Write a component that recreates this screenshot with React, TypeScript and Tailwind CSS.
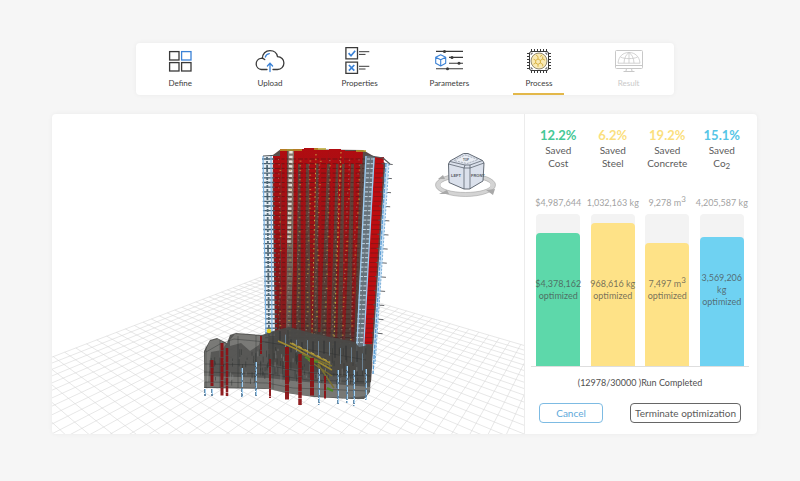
import type { ReactNode } from 'react';

interface Step {
  label: string;
  icon: ReactNode;
  state?: 'active' | 'disabled';
}

interface Metric {
  percent: string;
  name: ReactNode;
  original: ReactNode;
  optimized: ReactNode;
  fill: number;
  textClass: string;
  barClass: string;
}

const INK = '#3a3a3a';
const BLUE = '#3b82d6';

function DefineIcon() {
  return (
    <svg viewBox="0 0 30 30" className="h-[30px] w-[30px]" fill="none" stroke={INK} strokeWidth="1.3">
      <rect x="4.6" y="5.6" width="9.4" height="8.4" />
      <rect x="16.6" y="5.6" width="9.4" height="8.4" stroke={BLUE} />
      <rect x="4.6" y="16.6" width="9.4" height="8.4" />
      <rect x="16.6" y="16.6" width="9.4" height="8.4" />
    </svg>
  );
}

function UploadIcon() {
  return (
    <svg viewBox="0 0 30 30" className="h-[30px] w-[30px]" fill="none" strokeLinecap="round" strokeWidth="1.3">
      <path d="M12 23.5H6.4a5.6 5.6 0 0 1-.6-11.1 3.600 3.600 0 0 1 1.700-.1C7.400 7.800 10.600 4.600 15 4.600c3.800 0 6.800 2.400 7.500 6 3.700.2 6.400 2.900 6.400 6.300 0 3.700-2.700 6.600-6.400 6.600H18" stroke={INK} />
      <path d="M7.500 12.400c1 .2 1.700.6 2.300 1.200" stroke={INK} />
      <path d="M10.300 11c.5-1.900 1.900-3.100 4-3.400" stroke={BLUE} />
      <path d="M15 25.500v-8M12.400 20l2.600-2.700 2.600 2.700" stroke={BLUE} />
    </svg>
  );
}

function PropertiesIcon() {
  return (
    <svg viewBox="0 0 30 30" className="h-[30px] w-[30px]" fill="none" strokeWidth="1.3">
      <path d="M.9 1.600h11.600v11.200H.9zM.9 16.200h11.600v11.200H.9z" stroke={INK} />
      <path d="M3.600 7.200L6 9.800l4.200-5M3.900 19l5.400 5.600M9.300 19l-5.400 5.600" stroke={BLUE} strokeWidth="1.700" />
      <path d="M14 5.700h10.300M14 8.400h6.500M14 20.300h10.300M14 23h6.500" stroke={INK} strokeWidth="1" />
    </svg>
  );
}

function ParametersIcon() {
  return (
    <svg viewBox="0 0 30 30" className="h-[30px] w-[30px]" fill="none" stroke={INK} strokeWidth="1.100">
      <path d="M2 5.400h27M15 11.400h14M15 17.200h14M2 22.800h27" />
      <g fill={INK} stroke="none">
        <circle cx="10.500" cy="5.400" r="1.500" />
        <circle cx="18" cy="11.400" r="1.500" />
        <circle cx="25" cy="17.200" r="1.500" />
        <circle cx="13.500" cy="22.800" r="1.500" />
      </g>
      <path d="M6.700 8.800l5 2.500v6l-5 2.700-5-2.700v-6zM1.700 11.300l5 2.500 5-2.500M6.700 13.800V20" stroke={BLUE} strokeLinejoin="round" />
    </svg>
  );
}

function ProcessIcon() {
  const pins = [7.5, 10.5, 13.5, 16.5, 19.5, 22.5];
  return (
    <svg viewBox="0 0 30 30" className="h-[30px] w-[30px]" fill="none" stroke={INK} strokeWidth="1">
      {pins.map((p) => (
        <path key={p} d={`M${p} 3v3M${p} 24v3M3 ${p}h3M24 ${p}h3`} />
      ))}
      <rect x="5.500" y="5.500" width="19" height="19" rx="2" />
      <circle cx="15" cy="15" r="8" fill="#f9e9b4" stroke="#77705c" strokeWidth=".8" />
      <path
        d="M12 9l2 1.600v2.400l-2.300 1.300-2.200-1.200M18 9l-2 1.600M14 13l2.400 1.300 2.300-1.300v-2.400M16.400 14.300v2.700L14 18.400l-2.300-1.400v-2.700M16.400 17l2.300 1.300v2M14 18.400v2.400M11.700 17l-2.200 1.200M18.700 13l2.300 1.200"
        stroke="#cfa62c"
        strokeWidth=".8"
      />
      <path d="M7.200 9V7.200H9M21 7.200h1.800V9M22.800 21v1.800H21M9 22.800H7.200V21" strokeWidth=".7" />
    </svg>
  );
}

function ResultIcon() {
  return (
    <svg viewBox="0 0 30 30" className="h-[30px] w-[30px]" fill="none" stroke="#c8c8c8" strokeWidth="1">
      <rect x="1.500" y="4.500" width="27" height="18" rx="1" />
      <path d="M1.500 19.500h27M12.500 22.500l-.6 3M17.500 22.500l.6 3M9.500 25.500h11" />
      <path d="M4 17.200C4.500 10.500 9 6.500 15 6.500s10.500 4 11 10.700zM15 6.500v10.700M10 17.200c.2-4.700 1.700-8.500 5-10.700 3.300 2.200 4.800 6 5 10.700M6.500 11c2.500 1.200 5 1.600 8.500 1.600s6-.4 8.500-1.600" strokeWidth=".8" />
    </svg>
  );
}

const steps: Step[] = [
  { label: 'Define', icon: <DefineIcon /> },
  { label: 'Upload', icon: <UploadIcon /> },
  { label: 'Properties', icon: <PropertiesIcon /> },
  { label: 'Parameters', icon: <ParametersIcon /> },
  { label: 'Process', icon: <ProcessIcon />, state: 'active' },
  { label: 'Result', icon: <ResultIcon />, state: 'disabled' },
];

const metrics: Metric[] = [
  {
    percent: '12.2%',
    name: 'Cost',
    original: '$4,987,644',
    optimized: '$4,378,162',
    fill: 87.8,
    textClass: 'text-[#45c896]',
    barClass: 'bg-[#5dd8aa]',
  },
  {
    percent: '6.2%',
    name: 'Steel',
    original: '1,032,163 kg',
    optimized: '968,616 kg',
    fill: 93.8,
    textClass: 'text-[#fbdf7e]',
    barClass: 'bg-[#fee287]',
  },
  {
    percent: '19.2%',
    name: 'Concrete',
    original: <>9,278 m<sup className="text-[8px]">3</sup></>,
    optimized: <>7,497 m<sup className="text-[8px]">3</sup></>,
    fill: 80.8,
    textClass: 'text-[#fbdf7e]',
    barClass: 'bg-[#fee287]',
  },
  {
    percent: '15.1%',
    name: <>Co<sub className="text-[8px]">2</sub></>,
    original: '4,205,587 kg',
    optimized: <>3,569,206<br />kg</>,
    fill: 84.9,
    textClass: 'text-[#55c5e6]',
    barClass: 'bg-[#6fd2f2]',
  },
];

// deterministic noise so the model looks the same on every render
function noise(n: number) {
  const s = Math.sin(n * 127.1) * 43758.5453;
  return s - Math.floor(s);
}

// perspective ground plane, u and v run away from the two vanishing points
function ground(u: number, v: number) {
  const w = 1 - u - v;
  const x = (222 + 343 * u - 590 * v) / w;
  const y = (158 + 8 * u - 17 * v) / w;
  return `${x.toFixed(1)} ${y.toFixed(1)}`;
}

function gridPath() {
  const reach = 0.64;
  let d = '';
  for (let u = 0; u < reach; u += 0.0095) d += `M${ground(u, 0)}L${ground(u, reach - u)}`;
  for (let v = 0; v < reach; v += 0.0125) d += `M${ground(0, v)}L${ground(reach - v, v)}`;
  return d;
}

const GRID = gridPath();

// [top x, bottom x, width, top y, bottom y]
const redWalls = [
  [221, 223, 9, 42, 218],
  [228, 229, 7, 35, 222],
  [241, 240, 12, 35, 216],
  [252, 249, 14, 34, 222],
  [266, 262, 11, 36, 218],
  [277, 272, 12, 35, 228],
  [288, 281, 5, 36, 224],
  [293, 286, 10, 37, 228],
  [302, 294, 9, 37, 230],
];

// floor slabs showing between the walls, [top x, bottom x, bottom width]
const gaps = [
  [229, 227, 1],
  [246, 244, 5],
  [254, 253, 6],
  [264, 261, 5],
  [275, 268, 6],
  [284, 278, 5],
  [290, 285, 5],
  [299, 293, 6],
  [308, 302, 5],
];

const redPiles = [
  [160, 246, 272, 3],
  [170, 229, 282, 3],
  [175, 234, 282, 2.5],
  [209, 222, 240, 2],
  [218, 245, 284, 2],
  [235, 233, 286, 4],
  [248, 240, 291, 3.5],
  [260, 244, 282, 4],
  [273, 262, 285, 2],
];

const bluePiles = [
  [153, 275, 282],
  [160, 275, 282],
  [190, 254, 283],
  [204, 248, 283],
  [267, 255, 291],
  [286, 256, 291],
  [295, 252, 289],
  [302, 256, 292],
  [314, 255, 286],
];

function Tower() {
  const floors = Array.from({ length: 40 }, (_, i) => 45 + i * 4.7);
  return (
    <g>
      <defs>
        <linearGradient id="depth" x1="0" y1="0" x2="0" y2="1">
          <stop offset="0" stopColor="#3d3733" stopOpacity="0" />
          <stop offset=".55" stopColor="#3d3733" stopOpacity=".22" />
          <stop offset=".88" stopColor="#3d3733" stopOpacity=".4" />
          <stop offset="1" stopColor="#464442" stopOpacity=".95" />
        </linearGradient>
      </defs>
      <path d="M221 41L229 35 311 36 335 50 319 268 216 250z" fill="#5c4b47" />
      {redWalls.map(([top, bottom, w, y1, y2]) => (
        <path key={top} d={`M${top} ${y1}h${w}L${bottom + w} ${y2}h${-w}z`} fill="#b00c11" />
      ))}
      {gaps.map(([top, bottom, w]) => (
        <path key={top} d={`M${top} 50h${w * 0.5}L${bottom + w} 232h${-w}z`} fill="#5e4a40" opacity=".9" />
      ))}
      <path d="M236 37h6L241 150l-3 80h-4z" fill="#85766c" />
      <path d="M239 37L237 130" stroke="#eee6e0" strokeWidth="3.500" strokeDasharray="2.500 2.200" />
      <path d="M221 42L230 35 313 37 313 60 304 235H216z" fill="url(#depth)" />
      <path d="M211 42h9L223 222h-8z" fill="#e9f0f5" />
      <path d="M313 42h10L312 270h-9z" fill="#67747d" />
      <path d="M323 43h9L320 230h-9z" fill="#bd0d11" />
      {floors.map((y, i) => {
        const shift = (y - 45) * 0.06;
        return (
          <g key={y}>
            <path
              d={`M${223 + shift * 0.1} ${y}H${313 - shift}`}
              stroke="#3d1816"
              strokeWidth="1"
              opacity=".5"
              strokeDasharray="5 1.500 3 2"
            />
            <path d={`M${210 + shift * 0.3} ${y}h12`} stroke="#455b68" strokeWidth="1.300" />
            <path d={`M${315 - shift} ${y}h8`} stroke="#c3d5e2" strokeWidth="1" strokeDasharray="3 1" />
            <path d={`M${324 - shift} ${y}h9`} stroke="#5a1a1c" strokeWidth=".8" opacity=".6" />
            {i % 3 === 1 && <path d={`M${330 - shift} ${y}l11 .8`} stroke="#53565a" strokeWidth=".9" />}
            {Array.from({ length: 9 }, (_, k) => {
              const n = noise(i * 9 + k);
              return (
                <rect
                  key={k}
                  x={226 + k * 10 - shift * k * 0.11 + n * 2}
                  y={y + n * 2}
                  width={1 + n}
                  height="1.100"
                  fill={n > 0.6 ? '#c9a842' : '#a88b7d'}
                  opacity=".65"
                />
              );
            })}
          </g>
        );
      })}
      <g fill="none">
        <path d="M211 42L214 222M219 42L220 222" stroke="#7ab3e4" strokeWidth="1.200" />
        <path d="M215 43L217 222" stroke="#526b7a" strokeWidth="1.800" strokeDasharray="3 1" />
        <path d="M314 42L304 250M322 44L311 246" stroke="#9ccbf0" strokeWidth="1.300" />
        <path d="M335 50L322 248" stroke="#cbe2f5" strokeWidth="3.500" />
        <path d="M334 49L321 260" stroke="#5f9fd5" strokeWidth="1.400" strokeDasharray="4 1.200" />
        <path d="M337 50L323 250" stroke="#7aaed8" strokeWidth="1" strokeDasharray="2 1.500" />
        <path d="M264 40L260 220M289 38L282 226" stroke="#c9ab42" strokeWidth="1" strokeDasharray="1.500 3.200" />
        <path d="M228 36h22M262 35h12M304 37h10" stroke="#b8a32c" strokeWidth="1.400" />
        <path d="M313 41l18 3 7 6M211 42l17-1" stroke="#54585b" strokeWidth="1.200" />
      </g>
    </g>
  );
}

function Podium() {
  return (
    <g>
      <path
        d="M152 237l6-11 7-2 10 5 3-8 6-2 26 2 11-4 16-4 26 7 40 8 4 5 10-2 3 2-2 45-6 7h-12l-38-2-28-4-17-4-65-1z"
        fill="#4a4a48"
        opacity=".92"
      />
      <path d="M153 238l5-11 8-2 8 5-4 6-11 2-3 30h-4zM178 226l5-6 26 2-2 9-9 6-9-8-11 3z" fill="#9b9b98" opacity=".5" />
      <path d="M152 262l65 2 24 3 78 6-4 9-22 2-36-2-28-4-17-4-60-1z" fill="#aaaaa6" opacity=".4" />
      <g fill="none" stroke="#252828" strokeWidth=".7" opacity=".5">
        <path d="M154 238l14-8 14-5 32 3 34 6 66 12M153 250l62 1 40 8 64 3M152 258l64 2 40 6 63 2M153 268l62 1 26 5 76 3M154 232v42M168 226v48M186 222v52M204 221v53M221 218v57M236 216v62" />
      </g>
      {Array.from({ length: 150 }, (_, i) => {
        const x = 157 + noise(i + 3) * 158;
        const y = 233 + noise(i + 200) * 34;
        return (
          <path
            key={i}
            d={`M${x.toFixed(1)} ${y.toFixed(1)}v${(2 + noise(i) * 7).toFixed(1)}`}
            stroke={i % 4 === 0 ? '#8d918f' : '#303332'}
            strokeWidth=".8"
            opacity=".6"
          />
        );
      })}
      {Array.from({ length: 16 }, (_, i) => (
        <path
          key={i}
          d={`M${228 + i * 5.5} ${217 + noise(i) * 8 + i}v${9 + noise(i + 50) * 9}`}
          stroke={i % 2 ? '#71889a' : '#2d3031'}
          strokeWidth=".9"
        />
      ))}
      <g fill="none" strokeWidth="1.500">
        <path d="M226 227l18 8 36 21M238 229l40 20" stroke="#a08a2f" />
        <path d="M250 240l30 12M256 246l24 16M266 250l16 24" stroke="#7a7030" />
        <path d="M253 243l7 4 6 1M275 274l6 3" stroke="#4c8a26" strokeWidth="2" />
        <path d="M240 229l38 19" stroke="#d4b94d" strokeWidth=".8" strokeDasharray="4 3" />
      </g>
      {redPiles.map(([x, y1, y2, w]) => (
        <path key={x} d={`M${x} ${y1}V${y2}`} stroke="#8c1216" strokeWidth={w} strokeDasharray="7 .5" opacity=".95" />
      ))}
      {bluePiles.map(([x, y1, y2]) => (
        <g key={x}>
          <path d={`M${x} ${y1}V${y2}`} stroke="#587f9f" strokeWidth="1.800" strokeDasharray="4 1" />
          <path d={`M${x + 0.5} ${y1}V${y2}`} stroke="#a5d1f2" strokeWidth="1" strokeDasharray="5 2" />
        </g>
      ))}
      <circle cx="217" cy="217" r="2.200" fill="#e0cc1c" />
    </g>
  );
}

function ViewCube() {
  return (
    <g strokeLinejoin="round">
      <ellipse cx="413.500" cy="71" rx="28" ry="9.500" fill="none" stroke="#d4d4d4" strokeWidth="4" />
      <ellipse cx="413.500" cy="71" rx="30" ry="11.500" fill="none" stroke="#a5a5a5" strokeWidth=".6" />
      <ellipse cx="413.500" cy="71" rx="25.500" ry="7.500" fill="none" stroke="#a5a5a5" strokeWidth=".6" />
      <path d="M387 80l8-4 2 4zM434 76l9-1-2 6zM386 65l5-4 2 4z" fill="#a9a9a9" />
      <path
        d="M396.500 50l1.500-3 13.500-7.500h4.500l14.500 7 1.500 2.500-1 18-13.500 8h-5.500L397 68.500z"
        fill="#dbe1ec"
        stroke="#555c68"
        strokeWidth=".9"
      />
      <path
        d="M396.500 50l15.500 4v21M418 54v21M432 49l-14 5h-6M398 47.500l15 3.500h5l12.500-4.500M413 51l-1 3M418 51v3"
        fill="none"
        stroke="#4c5460"
        strokeWidth=".7"
      />
      <path d="M402 46.500l11-5.500 13 4.500-11 4z" fill="#e9edf4" stroke="#727a86" strokeWidth=".5" strokeDasharray="2 1" />
      <g fill="#555b65" fontFamily="Liberation Sans, sans-serif" fontSize="4" fontWeight="700">
        <text x="399" y="63">LEFT</text>
        <text x="419" y="63">FRONT</text>
        <text x="411" y="47" fontSize="3">TOP</text>
      </g>
    </g>
  );
}

function ModelViewer() {
  return (
    <svg
      viewBox="0 0 472 320"
      preserveAspectRatio="xMidYMid slice"
      className="min-w-0 flex-1"
      role="img"
      aria-label="Building model"
    >
      <path d={GRID} fill="none" stroke="#d6d6d6" strokeWidth=".6" />
      <Tower />
      <Podium />
      <ViewCube />
    </svg>
  );
}

function StepNav() {
  return (
    <nav className="mx-auto grid w-full max-w-[538px] grid-cols-6 rounded bg-white shadow-[0_0_5px_rgba(0,0,0,0.05)]">
      {steps.map(({ label, icon, state }) => (
        <button key={label} type="button" disabled={state === 'disabled'} className="flex flex-col items-center pt-[3px]">
          {icon}
          <span className={`mt-px text-[8px] leading-[12px] ${state === 'disabled' ? 'text-[#c9c9c9]' : 'text-[#3c3c3c]'}`}>
            {label}
          </span>
          <span className={`mt-1 h-[2px] w-[51px] ${state === 'active' ? 'bg-[#e3b84a]' : ''}`} />
        </button>
      ))}
    </nav>
  );
}

function MetricColumn({ metric }: { metric: Metric }) {
  return (
    <div className="flex flex-col items-center text-center">
      <div className={`text-[13px] font-bold leading-[16px] ${metric.textClass}`}>{metric.percent}</div>
      <div className="mt-px h-[53px] text-[10px] leading-[13px] text-[#5c5c5c]">
        Saved
        <br />
        {metric.name}
      </div>
      <div className="whitespace-nowrap text-[9px] leading-[12px] text-[#a3a3a3]">{metric.original}</div>
      <div className="mt-[5px] grid h-[152px] w-[44px] grid-cols-1 rounded-t bg-[#f3f3f3]">
        <div
          className={`col-start-1 row-start-1 self-end rounded-t ${metric.barClass}`}
          style={{ height: `${metric.fill}%` }}
        />
        <div className="col-start-1 row-start-1 self-center justify-self-center whitespace-nowrap text-[9px] leading-[12px] text-[#4a4a4a]/75">
          {metric.optimized}
          <br />
          optimized
        </div>
      </div>
    </div>
  );
}

export default function App() {
  return (
    <div className="min-h-screen bg-[#f6f6f6] pb-12 pl-[52px] pr-[43px] pt-[43px] font-[Lato,sans-serif]">
      <StepNav />
      <main className="mt-[19px] flex overflow-hidden rounded bg-white shadow-[0_0_5px_rgba(0,0,0,0.05)]">
        <ModelViewer />
        <section className="w-[233px] shrink-0 border-l border-[#ececec] pb-2 pl-[6px] pr-2 pt-[13px]">
          <div className="grid grid-cols-4 border-b border-[#dedede]">
            {metrics.map((metric) => (
              <MetricColumn key={metric.percent} metric={metric} />
            ))}
          </div>
          <p className="mt-[9px] text-center text-[9px] leading-[14px] text-[#4f4f4f]">(12978/30000 )Run Completed</p>
          <div className="mt-[13px] flex justify-between px-2">
            <button type="button" className="h-5 w-16 rounded border border-[#7dbbe3] text-[10px] leading-[14px] text-[#5da9da]">
              Cancel
            </button>
            <button type="button" className="h-5 rounded border border-[#666666] px-1 text-[10px] leading-[14px] text-[#5a5a5a]">
              Terminate optimization
            </button>
          </div>
        </section>
      </main>
    </div>
  );
}
